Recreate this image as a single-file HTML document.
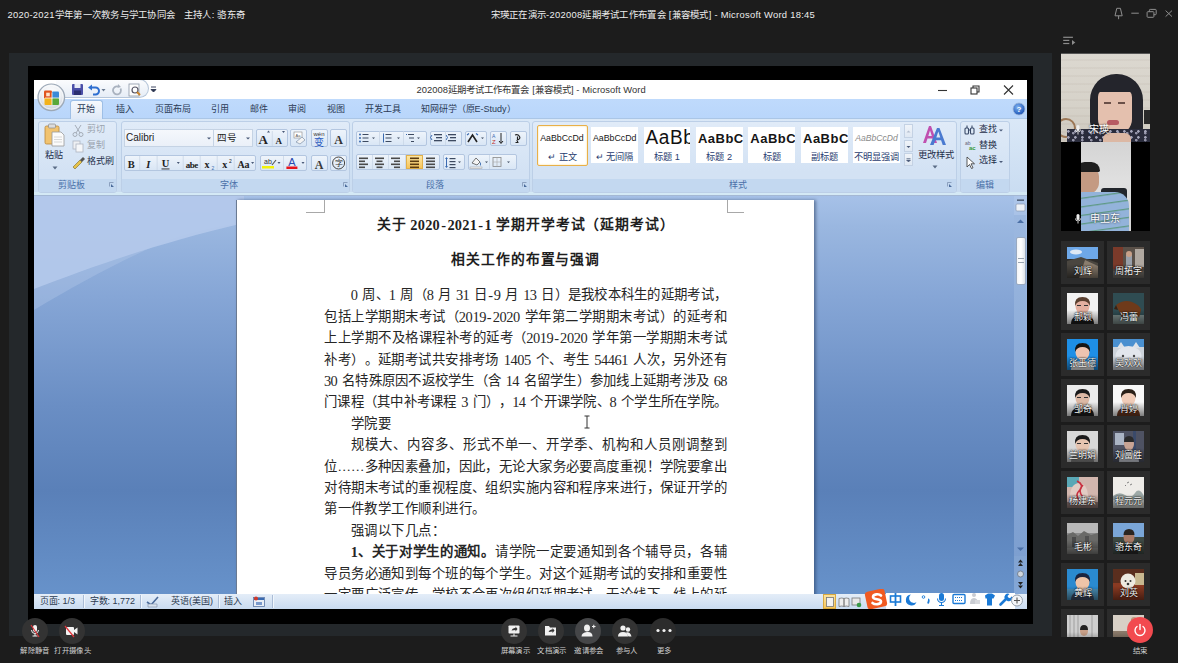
<!DOCTYPE html>
<html lang="zh-CN"><head><meta charset="utf-8">
<style>
*{margin:0;padding:0;box-sizing:border-box}
html,body{width:1178px;height:663px;overflow:hidden;background:#1c1c1c;font-family:"Liberation Sans",sans-serif;position:relative}
.a{position:absolute}
.t{white-space:nowrap}
i{font-style:normal}
#top1{left:7.5px;top:8px;color:#ececec;font-size:9.4px;line-height:14px;letter-spacing:.27px}
#top2{left:490.5px;top:8px;color:#ececec;font-size:9.4px;line-height:14px;letter-spacing:.27px}
#band{left:9px;top:53px;width:1043px;height:583px;background:#24282b}
#blk{left:28px;top:66px;width:1005px;height:558px;background:#000}
#word{left:34px;top:80px;width:993px;height:529px;background:#fff;overflow:hidden}
#ttl{left:0;top:0;width:993px;height:19px;background:#fff}
#tabs{left:0;top:19px;width:993px;height:19px;background:linear-gradient(#bfdafc,#b9d6fb)}
#rib{left:0;top:38px;width:993px;height:78px;background:linear-gradient(#dae8f7,#c9dcf1);border-bottom:1px solid #a4b8d4}
#doc{left:0;top:116px;width:993px;height:398px;overflow:hidden;background:linear-gradient(180deg,#a6c1e8 0px,#9ab7e0 30px,#86a6d6 100px,#6a8ec4 210px,#5a80b8 295px,#6792ca 398px)}
#page{left:202px;top:4px;width:578px;height:400px;background:#fff;box-shadow:inset 1px 0 0 #6a7a92,2px 0 3px rgba(40,60,95,.55)}
#sb{left:0;top:514px;width:993px;height:15px;background:linear-gradient(#e4edf8,#c9dbf0)}
.ln{position:absolute;height:16px;width:403px;font-family:"Liberation Serif",serif;font-size:13.4px;line-height:16px;color:#262626}
.c{position:absolute;top:0;text-align:center;display:block}
.b{font-weight:bold}
.d{font-size:14.4px}
.tt{position:absolute;height:16px;font-family:"Liberation Serif",serif;font-size:13.8px;line-height:16px;color:#1e1e1e;font-weight:bold}
.tab{position:absolute;top:4.6px;font-size:9px;line-height:11px;color:#2b3a55;white-space:nowrap}
.grp{position:absolute;top:2.5px;height:72.5px;border:1px solid #bccfe7;border-radius:3px;background:linear-gradient(#e0ebf8,#d3e2f4 70%);overflow:hidden}
.grp .lb{position:absolute;left:0;right:0;bottom:0;height:13.3px;background:#c3d8f0;color:#4a70a8;font-size:9px;line-height:13.3px;text-align:center}
.rt{position:absolute;font-size:9px;line-height:11px;color:#1f2f4a;white-space:nowrap}
.btn{position:absolute;border:1px solid #b3c6e0;border-radius:2px;background:linear-gradient(#eef4fb,#d9e6f5)}
.tile{position:absolute;width:43px;height:43px;background:#2b2b2b}
.av{position:absolute;left:6px;top:6px;width:31px;height:31px;overflow:hidden}
.nm{position:absolute;left:2px;top:25px;width:39px;text-align:center;color:#f4f4f4;font-size:9px;line-height:11px;text-shadow:0 0 1px #000,0 0 2px #000;white-space:nowrap}
.cb{position:absolute;width:26px;height:26px;border-radius:50%;background:#333}
.cl{position:absolute;color:#cfcfcf;font-size:7.4px;letter-spacing:.3px;line-height:10px;text-align:center;width:60px;white-space:nowrap}
.sbt{position:absolute;top:2px;font-size:9px;line-height:11px;color:#2c3a50;white-space:nowrap}
.sep{position:absolute;top:1px;width:1px;height:13px;background:#aabcd6;box-shadow:1px 0 0 #f0f6fc}

</style></head><body>
<div id="top1" class="a t">2020-2021学年第一次教务与学工协同会&nbsp;&nbsp;&nbsp;主持人: 骆东奇</div>
<div id="top2" class="a t">宋瑛正在演示-202008延期考试工作布置会 [兼容模式] - Microsoft Word 18:45</div>
<svg class="a" style="left:1110px;top:5px" width="66" height="16" viewBox="0 0 66 16">
  <g fill="none" stroke="#8e8e8e" stroke-width="1">
    <path d="M6.8 3.3h3.6l1.8 7.5H5z M8.6 10.8v3.4"/>
    <path d="M21.3 8.2h7.5"/>
    <rect x="39.4" y="4.4" width="6.8" height="5.3" rx=".8"/>
    <rect x="37.1" y="6.7" width="6.8" height="5.6" rx=".8" fill="#1c1c1c"/>
    <path d="M55.6 5.6l6.4 6M62 5.6l-6.4 6"/>
  </g>
</svg>
<svg class="a" style="left:1062px;top:34px" width="16" height="12" viewBox="0 0 16 12">
  <g fill="#8c8c8c"><rect x="1.2" y="2.7" width="9.7" height="1.2"/><rect x="1.2" y="5.8" width="6.1" height="1.2"/><rect x="1.2" y="8.9" width="6.1" height="1.2"/><path d="M10 6.1l3.3 2.3-3.3 2.5z"/></g>
</svg>
<div id="band" class="a"></div>
<div id="blk" class="a"></div>

<div id="word" class="a">
<div id="ttl" class="a">
  <div class="a t" style="left:382.5px;top:4px;font-size:9.4px;letter-spacing:.05px;line-height:11px;color:#333">202008延期考试工作布置会 [兼容模式] - Microsoft Word</div>
  <svg class="a" style="left:900px;top:3px" width="90" height="14" viewBox="0 0 90 14">
    <g fill="none" stroke="#333" stroke-width="1.1">
      <path d="M4 7.5h9"/>
      <rect x="37" y="5" width="6" height="6"/><path d="M39 5V3h6v6h-2"/>
      <path d="M70 2.5l9 9M79 2.5l-9 9"/>
    </g>
  </svg>
</div>
<div id="tabs" class="a">
  <div class="a" style="left:36px;top:1px;width:33px;height:19px;border:1px solid #9ebfe6;border-bottom:none;border-radius:3px 3px 0 0;background:linear-gradient(#f6f9fd,#dfe9f7);z-index:2"></div>
  <div class="tab" style="left:43px;z-index:3">开始</div>
  <div class="tab" style="left:82px">插入</div>
  <div class="tab" style="left:120.5px">页面布局</div>
  <div class="tab" style="left:176.5px">引用</div>
  <div class="tab" style="left:215.5px">邮件</div>
  <div class="tab" style="left:253.5px">审阅</div>
  <div class="tab" style="left:292.5px">视图</div>
  <div class="tab" style="left:330.5px">开发工具</div>
  <div class="tab" style="left:386.5px">知网研学（原E-Study）</div>
  <svg class="a" style="left:978px;top:3px" width="14" height="14" viewBox="0 0 14 14">
    <defs><radialGradient id="hg" cx="40%" cy="35%" r="65%"><stop offset="0" stop-color="#7fb2f0"/><stop offset="1" stop-color="#1c55b8"/></radialGradient></defs>
    <circle cx="7" cy="7" r="6" fill="url(#hg)" stroke="#9fb8d8" stroke-width=".8"/>
    <text x="7" y="10" font-size="8" font-weight="bold" fill="#fff" text-anchor="middle" font-family="Liberation Sans">?</text>
  </svg>
</div>
<!-- QAT capsule -->
<div class="a" style="left:22px;top:-1px;width:93px;height:19px;border:1px solid #b6c6da;border-left:none;border-radius:0 10px 10px 0;background:linear-gradient(#fbfcfe,#e6edf6)"></div>
<svg class="a" style="left:36px;top:2px" width="130" height="16" viewBox="0 0 130 16">
  <!-- save -->
  <rect x="2" y="2" width="11" height="11" rx="1" fill="#4b4fa8"/><rect x="4.5" y="2" width="6" height="4" fill="#e8ecf6"/><rect x="4" y="8.5" width="7" height="4.5" fill="#2b2f70"/>
  <!-- undo -->
  <path d="M20 5.5h5.5a3.5 3.5 0 0 1 0 7H23" fill="none" stroke="#2f6fd0" stroke-width="2"/><path d="M18 5.5l4-3v6z" fill="#2f6fd0"/>
  <path d="M31.5 7h4l-2 2.5z" fill="#6a7a90"/>
  <!-- redo -->
  <path d="M48 4.5a4 4 0 1 0 2.5 2" fill="none" stroke="#a9b2bf" stroke-width="1.8"/><path d="M48 2l3 3-3.5 1z" fill="#a9b2bf"/>
  <!-- preview -->
  <rect x="59" y="2" width="10" height="12" fill="#fdfdfd" stroke="#8a96a6" stroke-width=".8"/><circle cx="65" cy="8" r="3" fill="none" stroke="#556" stroke-width="1.2"/><path d="M67 10l3 3" stroke="#c9822a" stroke-width="2"/>
  <!-- customize -->
  <path d="M81 5h5M81 7.5h5l-2.5 2.5z" fill="#2a3450" stroke="#2a3450" stroke-width=".9"/>
</svg>
<!-- office button -->
<svg class="a" style="left:2.5px;top:2.5px" width="29" height="29" viewBox="0 0 29 29">
  <defs>
    <radialGradient id="ob" cx="50%" cy="35%" r="65%"><stop offset="0" stop-color="#ffffff"/><stop offset=".55" stop-color="#eef1f5"/><stop offset="1" stop-color="#c3cbd5"/></radialGradient>
  </defs>
  <circle cx="14.3" cy="14.3" r="13.3" fill="url(#ob)" stroke="#9ca8b6" stroke-width="1.2"/>
  <circle cx="14.3" cy="14.3" r="11.8" fill="none" stroke="#ffffff" stroke-width=".8" opacity=".8"/>
  <rect x="7" y="7.5" width="8" height="8" rx="1.2" fill="#e0541e"/>
  <rect x="9.2" y="9.7" width="3.6" height="3.6" fill="#fde3cc"/>
  <rect x="15" y="8.5" width="7" height="7" rx="1" fill="#3b8ad8"/>
  <rect x="7.5" y="15" width="7.5" height="7" rx="1" fill="#f2b21c"/>
  <rect x="15" y="15" width="7" height="7" rx="1" fill="#58a83a"/>
  <path d="M15 9.5v12M8 15h14" stroke="#fff" stroke-width=".9" opacity=".85"/>
</svg>

<div id="rib" class="a">
<div class="a" style="left:0;top:0;width:993px;height:1px;background:#abc6e6"></div>
<!-- light gaps -->
<div class="a" style="left:0;top:74.4px;width:993px;height:3px;background:#d4e9f5"></div>
<!-- clipboard -->
<div class="grp" style="left:3.7px;width:79.5px"><div class="lb" style="padding-right:12px">剪贴板</div></div>
<div class="grp" style="left:87.4px;width:228.4px"><div class="lb" style="padding-right:13px">字体</div></div>
<div class="grp" style="left:318.1px;width:177.6px"><div class="lb" style="padding-right:12px">段落</div></div>
<div class="grp" style="left:497.8px;width:425.2px"><div class="lb" style="padding-right:12px">样式</div></div>
<div class="grp" style="left:926px;width:50px"><div class="lb">编辑</div></div>
<!-- launchers -->
<svg class="a" style="left:0;top:0" width="993" height="78" viewBox="0 0 993 78">
  <g fill="none" stroke="#7d93b3" stroke-width=".8">
    <path d="M75.5 68.5v-4h4M309.5 68.5v-4h4M488.5 68.5v-4h4M913.5 68.5v-4h4"/>
  </g>
  <g fill="#4a6a9a">
    <path d="M77 66l3 3h-3z M311 66l3 3h-3z M490 66l3 3h-3z M915 66l3 3h-3z"/>
  </g>
</svg>

<!-- clipboard contents -->
<svg class="a" style="left:10px;top:5px" width="22" height="24" viewBox="0 0 22 24">
  <rect x="1" y="3" width="14" height="18" rx="1.5" fill="#f1c370" stroke="#b9873a" stroke-width=".8"/>
  <rect x="4.5" y="1" width="7" height="4" rx="1" fill="#dcdcdc" stroke="#8a8a8a" stroke-width=".7"/>
  <path d="M8 9h9l3 3v11H8z" fill="#fbfbfb" stroke="#9a9a9a" stroke-width=".8"/>
  <path d="M10 14h8M10 16.5h8M10 19h8" stroke="#c8c8c8" stroke-width=".7"/>
</svg>
<div class="rt" style="left:11px;top:32px">粘贴</div>
<svg class="a" style="left:18px;top:48px" width="6" height="4" viewBox="0 0 6 4"><path d="M0.5 0.5h5L3 3.5z" fill="#5a6c86"/></svg>
<svg class="a" style="left:37px;top:5px" width="14" height="48" viewBox="0 0 14 48">
  <g stroke="#a5adb8" stroke-width="1" fill="none"><path d="M4 2l5 8M10 2L5 10"/><circle cx="4" cy="11.5" r="2"/><circle cx="10" cy="11.5" r="2"/></g>
  <rect x="2" y="18" width="7" height="8" fill="#eef0f3" stroke="#aeb5c0" stroke-width=".8"/><rect x="5" y="21" width="7" height="8" fill="#f6f7f9" stroke="#aeb5c0" stroke-width=".8"/>
  <path d="M2 44l7-7 2 2-7 7z" fill="#e6c24a" stroke="#7a6a2a" stroke-width=".6"/><path d="M9 37l3-3 2 2-3 3z" fill="#555"/>
</svg>
<div class="rt" style="left:52.5px;top:6px;color:#9aa3ae">剪切</div>
<div class="rt" style="left:52.5px;top:21.5px;color:#9aa3ae">复制</div>
<div class="rt" style="left:52.5px;top:38px">格式刷</div>

<!-- font group contents -->
<div class="a" style="left:89.8px;top:11.4px;width:90.2px;height:18px;border:1px solid #c5d3e4;background:linear-gradient(#f5f8fc,#eaf0f8)"></div>
<div class="a" style="left:180px;top:11.4px;width:39.3px;height:18px;border:1px solid #c5d3e4;border-left:none;background:linear-gradient(#f5f8fc,#eaf0f8)"></div>
<div class="a t" style="left:92px;top:14px;font-size:10px;line-height:12px;color:#222">Calibri</div>
<div class="a t" style="left:182.5px;top:14px;font-size:9.5px;line-height:12px;color:#222">四号</div>
<svg class="a" style="left:0;top:0" width="993" height="78" viewBox="0 0 993 78">
  <path d="M173 19.5h4l-2 2z M212 19.5h4l-2 2z" fill="#4a5a78"/>
</svg>
<div class="btn" style="left:222px;top:11.4px;width:32.3px;height:18px"></div>
<div class="btn" style="left:256.4px;top:11.4px;width:17px;height:18px"></div>
<div class="btn" style="left:276.5px;top:11.4px;width:17px;height:18px"></div>
<div class="btn" style="left:296px;top:11.4px;width:17.3px;height:18px"></div>
<div class="btn" style="left:89.8px;top:37.3px;width:132.6px;height:15.5px"></div>
<div class="btn" style="left:225.6px;top:37.3px;width:47.8px;height:15.5px"></div>
<div class="btn" style="left:276.5px;top:37.3px;width:17px;height:15.5px"></div>
<div class="btn" style="left:296px;top:37.3px;width:17.3px;height:15.5px"></div>
<svg class="a" style="left:0;top:0" width="993" height="78" viewBox="0 0 993 78">
  <g font-family="Liberation Serif" font-weight="bold" fill="#222" text-anchor="middle">
    <text x="229.2" y="26" font-size="13">A</text><text x="244.7" y="26" font-size="9">A</text>
    <text x="97.2" y="50" font-size="10.5">B</text>
    <text x="114.2" y="50" font-size="10.5" font-style="italic">I</text>
    <text x="131.6" y="49" font-size="10.5">U</text>
    <text x="157.7" y="49.5" font-size="9" letter-spacing="-.5">abe</text>
    <text x="173" y="50" font-size="10">x</text>
    <text x="190.7" y="50" font-size="10">x</text>
    <text x="209.3" y="50" font-size="10" letter-spacing="-.3">Aa</text>
    <text x="304.6" y="26" font-size="12" fill="#333">A</text>
    <text x="285" y="50.5" font-size="12" fill="#3a3a3a">A</text>
  </g>
  <rect x="127.5" y="50.5" width="8" height=".9" fill="#222"/>
  <text x="177.5" y="52" font-size="5" font-family="Liberation Sans" fill="#3a6ab0">2</text>
  <text x="195" y="45" font-size="5" font-family="Liberation Sans" fill="#222">2</text>
  <g fill="#4a5a78"><path d="M233 14.5l1.5-2 1.5 2z M248 13l1.5 2 1.5-2z M142.8 44h3l-1.5 2z M217.1 44h3l-1.5 2z M243.5 44h3l-1.5 2z M267.5 44h3l-1.5 2z"/></g>
  <g stroke="#c9d6e6" stroke-width=".8"><path d="M105.7 38v14M123.1 38v14M149.2 38v14M166.2 38v14M183.2 38v14M200.2 38v14M238.3 13v15M249.5 38v14"/></g>
  <!-- highlight -->
  <text x="234" y="45.5" font-size="7" font-family="Liberation Sans" fill="#333" text-anchor="middle">ab</text><path d="M238 47l4-5" stroke="#555" stroke-width="1.2"/>
  <rect x="228" y="48" width="12" height="2.5" fill="#f2f20a"/>
  <text x="257.9" y="48" font-size="11" font-family="Liberation Sans" fill="#2a4ab0" text-anchor="middle">A</text>
  <rect x="252.4" y="48.5" width="11" height="2.5" fill="#e8141b"/>
  <!-- clear formatting -->
  <rect x="260" y="14" width="8" height="6" fill="#fff" stroke="#888" stroke-width=".6"/><text x="264" y="19" font-size="4" fill="#555" text-anchor="middle" font-family="Liberation Sans">Aa</text><path d="M262 24l6-5 3 3-5 4z" fill="#f4f4f4" stroke="#8090a8" stroke-width=".7"/>
  <!-- wen -->
  <text x="285" y="18" font-size="6" font-family="Liberation Sans" fill="#333" text-anchor="middle">wén</text>
  <text x="285" y="27.5" font-size="10" font-family="Liberation Sans" fill="#2a5ac0" text-anchor="middle">变</text>
  <!-- enclosed char -->
  <circle cx="304.6" cy="45" r="6" fill="none" stroke="#444" stroke-width="1"/><text x="304.6" y="48.3" font-size="8" fill="#333" font-family="Liberation Sans" text-anchor="middle">字</text>
</svg>

<!-- paragraph group -->
<div class="btn" style="left:321.5px;top:12.6px;width:71px;height:15.3px"></div>
<div class="btn" style="left:395.5px;top:12.6px;width:32.3px;height:15.3px"></div>
<div class="btn" style="left:430.7px;top:12.6px;width:22.6px;height:15.3px"></div>
<div class="btn" style="left:456.2px;top:12.6px;width:16.4px;height:15.3px"></div>
<div class="btn" style="left:475.7px;top:12.6px;width:17px;height:15.3px"></div>
<div class="btn" style="left:321.5px;top:36.4px;width:84.2px;height:15.3px"></div>
<div class="a" style="left:372px;top:37px;width:17px;height:14.2px;background:linear-gradient(#fde7a4,#f7c45a);border:1px solid #e2b04a"></div>
<div class="btn" style="left:408.6px;top:36.4px;width:22.9px;height:15.3px"></div>
<div class="btn" style="left:434px;top:36.4px;width:48.5px;height:15.3px"></div>
<svg class="a" style="left:0;top:0" width="993" height="78" viewBox="0 0 993 78">
  <g fill="#3d4a60">
    <!-- bullets -->
    <circle cx="326" cy="16.5" r="1" fill="#3a6ab0"/><circle cx="326" cy="20" r="1" fill="#3a6ab0"/><circle cx="326" cy="23.5" r="1" fill="#3a6ab0"/>
    <rect x="328.5" y="16" width="6" height="1"/><rect x="328.5" y="19.5" width="6" height="1"/><rect x="328.5" y="23" width="6" height="1"/>
    <path d="M338 19.5h3l-1.5 1.5z"/>
    <rect x="349" y="15.5" width="1" height="9" fill="#3a6ab0"/>
    <rect x="351.5" y="16" width="6" height="1"/><rect x="351.5" y="19.5" width="6" height="1"/><rect x="351.5" y="23" width="6" height="1"/>
    <path d="M363 19.5h3l-1.5 1.5z"/>
    <rect x="372" y="16" width="1" height="1" fill="#3a6ab0"/><rect x="374" y="16" width="6" height="1"/><rect x="375" y="19.5" width="5" height="1"/><rect x="377" y="23" width="3" height="1"/>
    <path d="M383 19.5h3l-1.5 1.5z"/>
    <!-- indent -->
    <rect x="400" y="16" width="8" height="1.3"/><rect x="402" y="19" width="6" height="1.3"/><rect x="400" y="22" width="8" height="1.3"/><path d="M398 17l-1.5 2.5 1.5 2.5" stroke="#3a6ab0" fill="none"/>
    <rect x="414" y="16" width="8" height="1.3"/><rect x="416" y="19" width="6" height="1.3"/><rect x="414" y="22" width="8" height="1.3"/><path d="M412 17l1.5 2.5-1.5 2.5" stroke="#3a6ab0" fill="none"/>
    <!-- asian -->
    <path d="M434 24l4.5-7 4.5 7" stroke="#222" stroke-width="1.6" fill="none"/><path d="M433 17l2-1.5M444 17l-2-1.5" stroke="#3a6ab0" stroke-width="1.2"/>
    <path d="M447 19.5h3l-1.5 1.5z"/>
    <!-- sort -->
    <text x="458" y="20" font-size="5" font-family="Liberation Sans" fill="#3a6ab0">A</text><text x="458" y="26" font-size="6" font-family="Liberation Sans" fill="#c03030">Z</text>
    <path d="M467 15v10M465 23l2 2.5 2-2.5" stroke="#222" fill="none"/>
    <!-- marks -->
    <path d="M481 17q3-1 4.5 1.5t-3 4M483.5 18.5v6M481.5 24.5h3" stroke="#222" stroke-width="1.2" fill="none"/>
    <!-- align -->
    <g fill="#4a4a4a">
      <rect x="325" y="39.5" width="9" height="1.6"/><rect x="325" y="42.5" width="6" height="1.6"/><rect x="325" y="45.5" width="9" height="1.6"/><rect x="325" y="48.5" width="6" height="1.6"/>
      <rect x="341" y="39.5" width="9" height="1.6"/><rect x="342.5" y="42.5" width="6" height="1.6"/><rect x="341" y="45.5" width="9" height="1.6"/><rect x="342.5" y="48.5" width="6" height="1.6"/>
      <rect x="357" y="39.5" width="9" height="1.6"/><rect x="360" y="42.5" width="6" height="1.6"/><rect x="357" y="45.5" width="9" height="1.6"/><rect x="360" y="48.5" width="6" height="1.6"/>
      <rect x="376" y="39.5" width="9" height="1.6" fill="#5a3a10"/><rect x="376" y="42.5" width="9" height="1.6" fill="#5a3a10"/><rect x="376" y="45.5" width="9" height="1.6" fill="#5a3a10"/><rect x="376" y="48.5" width="9" height="1.6" fill="#5a3a10"/>
      <rect x="392" y="39.5" width="9" height="1.6"/><rect x="392" y="42.5" width="9" height="1.6"/><rect x="392" y="45.5" width="9" height="1.6"/><rect x="392" y="48.5" width="9" height="1.6"/>
    </g>
    <!-- line spacing -->
    <path d="M412.5 39l1.5 2h-3zM412.5 50l1.5-2h-3z" fill="#3a6ab0"/><rect x="412" y="41" width="1" height="7" fill="#3a6ab0"/>
    <rect x="415.5" y="40" width="6" height="1.2"/><rect x="415.5" y="43" width="6" height="1.2"/><rect x="415.5" y="46" width="6" height="1.2"/><rect x="415.5" y="49" width="6" height="1.2"/>
    <path d="M424 43.5h3l-1.5 1.5z"/>
    <!-- shading -->
    <path d="M438 45l4-5 4 4-3 3z" fill="#f4f4f4" stroke="#555" stroke-width=".8"/><path d="M446 44q2 2 0 4" fill="#3a6ab0"/>
    <rect x="436" y="49" width="12" height="1.5" fill="#f4f4f4" stroke="#999" stroke-width=".5"/>
    <path d="M451 43.5h3l-1.5 1.5z"/>
    <rect x="459" y="39.5" width="8" height="9" fill="none" stroke="#888" stroke-width=".8"/><path d="M463 39.5v9M459 44h8" stroke="#aaa" stroke-width=".6"/>
    <path d="M473 43.5h3l-1.5 1.5z"/>
  </g>
  <g stroke="#c9d6e6" stroke-width=".8"><path d="M345.5 13v14M369.5 13v14M411.5 13v14M338.5 37v14M354.5 37v14M371.5 37v14M455.5 37v14"/></g>
</svg>

<!-- styles gallery -->
<div class="a" style="left:502.6px;top:6.7px;width:51.5px;height:41.1px;border:1.5px solid #e9b048;border-radius:2px;background:#fff;box-shadow:inset 0 0 2px #f6d78a"></div>
<div class="a" style="left:557.3px;top:9px;width:46.7px;height:36px;background:#fff"></div>
<div class="a" style="left:609.6px;top:9px;width:46.7px;height:36px;background:#fff"></div>
<div class="a" style="left:661.9px;top:9px;width:46.7px;height:36px;background:#fff"></div>
<div class="a" style="left:714.3px;top:9px;width:46.7px;height:36px;background:#fff"></div>
<div class="a" style="left:767px;top:9px;width:46.7px;height:36px;background:#fff"></div>
<div class="a" style="left:819.2px;top:9px;width:46.7px;height:36px;background:#fff"></div>
<div class="a t" style="left:505px;top:15px;font-size:8.8px;line-height:11px;color:#161616;width:46px;text-align:center">AaBbCcDd</div>
<div class="a t" style="left:557.3px;top:15px;font-size:8.8px;line-height:11px;color:#161616;width:46.7px;text-align:center">AaBbCcDd</div>
<div class="a t" style="left:609.6px;top:9px;width:46.7px;height:22px;overflow:hidden;font-size:19px;line-height:22px;color:#111;padding-left:2px;letter-spacing:.6px;transform:scaleY(1.08)">AaBb</div>
<div class="a t" style="left:661.9px;top:12px;width:46.7px;height:18px;overflow:hidden;font-weight:bold;font-size:13px;line-height:18px;color:#151515;padding-left:2px;letter-spacing:.5px">AaBbC</div>
<div class="a t" style="left:714.3px;top:12px;width:46.7px;height:18px;overflow:hidden;font-weight:bold;font-size:13px;line-height:18px;color:#151515;padding-left:2px;letter-spacing:.5px">AaBbC</div>
<div class="a t" style="left:767px;top:12px;width:46.7px;height:18px;overflow:hidden;font-weight:bold;font-size:13px;line-height:18px;color:#151515;padding-left:2px;letter-spacing:.5px">AaBbC</div>
<div class="a t" style="left:819.2px;top:15px;font-size:8.6px;line-height:11px;color:#8a8a8a;font-style:italic;width:46.7px;text-align:center">AaBbCcDd</div>
<div class="a t" style="left:503px;top:34px;font-size:9.2px;line-height:11px;color:#283c70;width:51px;text-align:center">↵ 正文</div>
<div class="a t" style="left:557.3px;top:34px;font-size:9.2px;line-height:11px;color:#283c70;width:46.7px;text-align:center">↵ 无间隔</div>
<div class="a t" style="left:609.6px;top:34px;font-size:9.2px;line-height:11px;color:#283c70;width:46.7px;text-align:center">标题 1</div>
<div class="a t" style="left:661.9px;top:34px;font-size:9.2px;line-height:11px;color:#283c70;width:46.7px;text-align:center">标题 2</div>
<div class="a t" style="left:714.3px;top:34px;font-size:9.2px;line-height:11px;color:#283c70;width:46.7px;text-align:center">标题</div>
<div class="a t" style="left:767px;top:34px;font-size:9.2px;line-height:11px;color:#283c70;width:46.7px;text-align:center">副标题</div>
<div class="a t" style="left:819.2px;top:34px;font-size:9.2px;line-height:11px;color:#283c70;width:46.7px;text-align:center">不明显强调</div>
<!-- gallery scroll -->
<div class="a" style="left:870px;top:6px;width:9px;height:13.7px;border:1px solid #c4d2e4;background:linear-gradient(#f0f4f9,#dfe8f3)"></div>
<div class="a" style="left:870px;top:21.6px;width:9px;height:12.8px;border:1px solid #c4d2e4;background:linear-gradient(#f0f4f9,#dfe8f3)"></div>
<div class="a" style="left:870px;top:35.4px;width:9px;height:12.8px;border:1px solid #c4d2e4;background:linear-gradient(#f0f4f9,#dfe8f3)"></div>
<svg class="a" style="left:870px;top:6px" width="9" height="43" viewBox="0 0 9 43"><path d="M2.5 8.5l2-2 2 2z" fill="#b5c0d0"/><path d="M2.5 22h4l-2 2z" fill="#4a5a78"/><path d="M2.5 34.5h4M2.5 36h4l-2 2z" fill="#4a5a78" stroke="#4a5a78" stroke-width=".6"/></svg>
<!-- change styles -->
<svg class="a" style="left:887px;top:5px" width="26" height="24" viewBox="0 0 26 24">
  <path d="M2 20L8 3h2l6 17h-3l-1.5-4.5h-5L5 20z M7.3 13h3.5L9 7.5z" fill="#c050b0"/>
  <path d="M9 22L16 5h2.5L25 22h-3.3l-1.6-4.7h-5.8L12.6 22z M15.3 14.5h4L17.3 8.5z" fill="#4a7ad0"/>
</svg>
<div class="a t" style="left:883.7px;top:31.5px;font-size:9.3px;line-height:11px;color:#1f2f4a">更改样式</div>
<svg class="a" style="left:898px;top:47px" width="6" height="4" viewBox="0 0 6 4"><path d="M0.5 0.5h5L3 3.5z" fill="#5a6c86"/></svg>

<!-- edit group -->
<svg class="a" style="left:928px;top:5px" width="50" height="48" viewBox="0 0 50 48">
  <g fill="none" stroke="#3a4a68" stroke-width="1.1"><rect x="3" y="5" width="3.5" height="6" rx="1"/><rect x="8.5" y="5" width="3.5" height="6" rx="1"/><path d="M5 2.5v2.5M10 2.5v2.5M6.5 7h2"/></g>
  <text x="3" y="22" font-size="5" font-family="Liberation Sans" fill="#667">ab</text><text x="7" y="27" font-size="6" font-weight="bold" font-family="Liberation Sans" fill="#3a9a3a">ac</text>
  <path d="M5 34v10l2.5-2.5 2 4 1.5-.7-2-4h3.5z" fill="#fff" stroke="#333" stroke-width=".8"/>
  <path d="M37 6.5h4l-2 2z M37 38h4l-2 2z" fill="#4a5a78"/>
</svg>
<div class="rt" style="left:945.3px;top:6px">查找</div>
<div class="rt" style="left:945.3px;top:21.5px">替换</div>
<div class="rt" style="left:945.3px;top:37.2px">选择</div>
</div>

<div id="doc" class="a">
<svg class="a" style="left:0;top:0" width="993" height="399" viewBox="0 0 993 399">
<path d="M0 114 C 40 90, 80 68, 125 48 C 150 38, 180 31, 210 26 L 210 0 L 0 0 Z" fill="#b6cbeb" opacity=".35"/>
<path d="M0 93 C 55 72, 120 48, 210 27 L 210 0 L 0 0 Z" fill="#b4c9eb" opacity=".9"/>
</svg>
<div id="page" class="a">
<div class="a" style="left:70px;top:0;width:19px;height:13px;border-right:1px solid #a8a8a8;border-bottom:1px solid #a8a8a8"></div>
<div class="a" style="left:491px;top:0;width:17px;height:13px;border-left:1px solid #a8a8a8;border-bottom:1px solid #a8a8a8"></div>
<div class="tt" style="left:140.5px;top:17px"><i class="c" style="left:0.00px;width:14.85px">关</i><i class="c" style="left:14.85px;width:14.85px">于</i><i class="c d" style="left:33.71px;width:7.42px">2</i><i class="c d" style="left:41.13px;width:7.42px">0</i><i class="c d" style="left:48.56px;width:7.42px">2</i><i class="c d" style="left:55.98px;width:7.42px">0</i><i class="c d" style="left:63.41px;width:7.42px">-</i><i class="c d" style="left:70.83px;width:7.42px">2</i><i class="c d" style="left:78.26px;width:7.42px">0</i><i class="c d" style="left:85.68px;width:7.42px">2</i><i class="c d" style="left:93.11px;width:7.42px">1</i><i class="c d" style="left:100.53px;width:7.42px">-</i><i class="c d" style="left:107.96px;width:7.42px">1</i><i class="c" style="left:119.39px;width:14.85px">学</i><i class="c" style="left:134.24px;width:14.85px">期</i><i class="c" style="left:149.09px;width:14.85px">开</i><i class="c" style="left:163.94px;width:14.85px">学</i><i class="c" style="left:178.79px;width:14.85px">考</i><i class="c" style="left:193.64px;width:14.85px">试</i><i class="c" style="left:208.49px;width:14.85px">（</i><i class="c" style="left:223.34px;width:14.85px">延</i><i class="c" style="left:238.19px;width:14.85px">期</i><i class="c" style="left:253.04px;width:14.85px">考</i><i class="c" style="left:267.89px;width:14.85px">试</i><i class="c" style="left:282.74px;width:14.85px">）</i></div>
<div class="tt" style="left:215.0px;top:52px"><i class="c" style="left:0.00px;width:14.85px">相</i><i class="c" style="left:14.85px;width:14.85px">关</i><i class="c" style="left:29.70px;width:14.85px">工</i><i class="c" style="left:44.55px;width:14.85px">作</i><i class="c" style="left:59.40px;width:14.85px">的</i><i class="c" style="left:74.25px;width:14.85px">布</i><i class="c" style="left:89.10px;width:14.85px">置</i><i class="c" style="left:103.95px;width:14.85px">与</i><i class="c" style="left:118.80px;width:14.85px">强</i><i class="c" style="left:133.65px;width:14.85px">调</i></div>
<div class="ln" style="top:87.3px;left:114.86px"><i class="c d" style="left:0.00px;width:6.71px">0</i><i class="c" style="left:11.36px;width:13.43px">周</i><i class="c" style="left:24.62px;width:13.43px">、</i><i class="c d" style="left:37.89px;width:6.71px">1</i><i class="c" style="left:49.24px;width:13.43px">周</i><i class="c" style="left:62.51px;width:13.43px">（</i><i class="c d" style="left:75.77px;width:6.71px">8</i><i class="c" style="left:87.13px;width:13.43px">月</i><i class="c d" style="left:105.20px;width:6.71px">3</i><i class="c d" style="left:111.75px;width:6.71px">1</i><i class="c" style="left:123.11px;width:13.43px">日</i><i class="c d" style="left:136.37px;width:6.71px">-</i><i class="c d" style="left:142.92px;width:6.71px">9</i><i class="c" style="left:154.28px;width:13.43px">月</i><i class="c d" style="left:172.35px;width:6.71px">1</i><i class="c d" style="left:178.90px;width:6.71px">3</i><i class="c" style="left:190.26px;width:13.43px">日</i><i class="c" style="left:203.52px;width:13.43px">）</i><i class="c" style="left:216.79px;width:13.43px">是</i><i class="c" style="left:230.05px;width:13.43px">我</i><i class="c" style="left:243.32px;width:13.43px">校</i><i class="c" style="left:256.58px;width:13.43px">本</i><i class="c" style="left:269.85px;width:13.43px">科</i><i class="c" style="left:283.12px;width:13.43px">生</i><i class="c" style="left:296.38px;width:13.43px">的</i><i class="c" style="left:309.65px;width:13.43px">延</i><i class="c" style="left:322.91px;width:13.43px">期</i><i class="c" style="left:336.18px;width:13.43px">考</i><i class="c" style="left:349.44px;width:13.43px">试</i><i class="c" style="left:362.71px;width:13.43px">，</i></div>
<div class="ln" style="top:108.7px;left:88.00px"><i class="c" style="left:0.00px;width:13.43px">包</i><i class="c" style="left:13.48px;width:13.43px">括</i><i class="c" style="left:26.97px;width:13.43px">上</i><i class="c" style="left:40.45px;width:13.43px">学</i><i class="c" style="left:53.94px;width:13.43px">期</i><i class="c" style="left:67.42px;width:13.43px">期</i><i class="c" style="left:80.91px;width:13.43px">末</i><i class="c" style="left:94.39px;width:13.43px">考</i><i class="c" style="left:107.87px;width:13.43px">试</i><i class="c" style="left:121.36px;width:13.43px">（</i><i class="c d" style="left:134.84px;width:6.71px">2</i><i class="c d" style="left:141.61px;width:6.71px">0</i><i class="c d" style="left:148.38px;width:6.71px">1</i><i class="c d" style="left:155.15px;width:6.71px">9</i><i class="c d" style="left:161.92px;width:6.71px">-</i><i class="c d" style="left:168.69px;width:6.71px">2</i><i class="c d" style="left:175.46px;width:6.71px">0</i><i class="c d" style="left:182.23px;width:6.71px">2</i><i class="c d" style="left:189.00px;width:6.71px">0</i><i class="c" style="left:200.79px;width:13.43px">学</i><i class="c" style="left:214.27px;width:13.43px">年</i><i class="c" style="left:227.76px;width:13.43px">第</i><i class="c" style="left:241.24px;width:13.43px">二</i><i class="c" style="left:254.73px;width:13.43px">学</i><i class="c" style="left:268.21px;width:13.43px">期</i><i class="c" style="left:281.70px;width:13.43px">期</i><i class="c" style="left:295.18px;width:13.43px">末</i><i class="c" style="left:308.66px;width:13.43px">考</i><i class="c" style="left:322.15px;width:13.43px">试</i><i class="c" style="left:335.63px;width:13.43px">）</i><i class="c" style="left:349.12px;width:13.43px">的</i><i class="c" style="left:362.60px;width:13.43px">延</i><i class="c" style="left:376.09px;width:13.43px">考</i><i class="c" style="left:389.57px;width:13.43px">和</i></div>
<div class="ln" style="top:130.1px;left:88.00px"><i class="c" style="left:0.00px;width:13.43px">上</i><i class="c" style="left:13.48px;width:13.43px">上</i><i class="c" style="left:26.97px;width:13.43px">学</i><i class="c" style="left:40.45px;width:13.43px">期</i><i class="c" style="left:53.94px;width:13.43px">不</i><i class="c" style="left:67.42px;width:13.43px">及</i><i class="c" style="left:80.91px;width:13.43px">格</i><i class="c" style="left:94.39px;width:13.43px">课</i><i class="c" style="left:107.87px;width:13.43px">程</i><i class="c" style="left:121.36px;width:13.43px">补</i><i class="c" style="left:134.84px;width:13.43px">考</i><i class="c" style="left:148.33px;width:13.43px">的</i><i class="c" style="left:161.81px;width:13.43px">延</i><i class="c" style="left:175.30px;width:13.43px">考</i><i class="c" style="left:188.78px;width:13.43px">（</i><i class="c d" style="left:202.26px;width:6.71px">2</i><i class="c d" style="left:209.03px;width:6.71px">0</i><i class="c d" style="left:215.80px;width:6.71px">1</i><i class="c d" style="left:222.57px;width:6.71px">9</i><i class="c d" style="left:229.34px;width:6.71px">-</i><i class="c d" style="left:236.11px;width:6.71px">2</i><i class="c d" style="left:242.88px;width:6.71px">0</i><i class="c d" style="left:249.65px;width:6.71px">2</i><i class="c d" style="left:256.42px;width:6.71px">0</i><i class="c" style="left:268.21px;width:13.43px">学</i><i class="c" style="left:281.70px;width:13.43px">年</i><i class="c" style="left:295.18px;width:13.43px">第</i><i class="c" style="left:308.66px;width:13.43px">一</i><i class="c" style="left:322.15px;width:13.43px">学</i><i class="c" style="left:335.63px;width:13.43px">期</i><i class="c" style="left:349.12px;width:13.43px">期</i><i class="c" style="left:362.60px;width:13.43px">末</i><i class="c" style="left:376.09px;width:13.43px">考</i><i class="c" style="left:389.57px;width:13.43px">试</i></div>
<div class="ln" style="top:151.5px;left:88.00px"><i class="c" style="left:0.00px;width:13.43px">补</i><i class="c" style="left:13.44px;width:13.43px">考</i><i class="c" style="left:26.88px;width:13.43px">）</i><i class="c" style="left:40.32px;width:13.43px">。</i><i class="c" style="left:53.76px;width:13.43px">延</i><i class="c" style="left:67.20px;width:13.43px">期</i><i class="c" style="left:80.64px;width:13.43px">考</i><i class="c" style="left:94.08px;width:13.43px">试</i><i class="c" style="left:107.52px;width:13.43px">共</i><i class="c" style="left:120.96px;width:13.43px">安</i><i class="c" style="left:134.40px;width:13.43px">排</i><i class="c" style="left:147.84px;width:13.43px">考</i><i class="c" style="left:161.28px;width:13.43px">场</i><i class="c d" style="left:179.70px;width:6.71px">1</i><i class="c d" style="left:186.43px;width:6.71px">4</i><i class="c d" style="left:193.15px;width:6.71px">0</i><i class="c d" style="left:199.88px;width:6.71px">5</i><i class="c" style="left:211.58px;width:13.43px">个</i><i class="c" style="left:225.02px;width:13.43px">、</i><i class="c" style="left:238.46px;width:13.43px">考</i><i class="c" style="left:251.90px;width:13.43px">生</i><i class="c d" style="left:270.32px;width:6.71px">5</i><i class="c d" style="left:277.05px;width:6.71px">4</i><i class="c d" style="left:283.77px;width:6.71px">4</i><i class="c d" style="left:290.50px;width:6.71px">6</i><i class="c d" style="left:297.22px;width:6.71px">1</i><i class="c" style="left:308.93px;width:13.43px">人</i><i class="c" style="left:322.37px;width:13.43px">次</i><i class="c" style="left:335.81px;width:13.43px">，</i><i class="c" style="left:349.25px;width:13.43px">另</i><i class="c" style="left:362.69px;width:13.43px">外</i><i class="c" style="left:376.13px;width:13.43px">还</i><i class="c" style="left:389.57px;width:13.43px">有</i></div>
<div class="ln" style="top:172.9px;left:88.00px"><i class="c d" style="left:0.00px;width:6.71px">3</i><i class="c d" style="left:6.53px;width:6.71px">0</i><i class="c" style="left:17.86px;width:13.43px">名</i><i class="c" style="left:31.10px;width:13.43px">特</i><i class="c" style="left:44.35px;width:13.43px">殊</i><i class="c" style="left:57.60px;width:13.43px">原</i><i class="c" style="left:70.85px;width:13.43px">因</i><i class="c" style="left:84.10px;width:13.43px">不</i><i class="c" style="left:97.35px;width:13.43px">返</i><i class="c" style="left:110.60px;width:13.43px">校</i><i class="c" style="left:123.84px;width:13.43px">学</i><i class="c" style="left:137.09px;width:13.43px">生</i><i class="c" style="left:150.34px;width:13.43px">（</i><i class="c" style="left:163.59px;width:13.43px">含</i><i class="c d" style="left:181.63px;width:6.71px">1</i><i class="c d" style="left:188.16px;width:6.71px">4</i><i class="c" style="left:199.48px;width:13.43px">名</i><i class="c" style="left:212.73px;width:13.43px">留</i><i class="c" style="left:225.98px;width:13.43px">学</i><i class="c" style="left:239.23px;width:13.43px">生</i><i class="c" style="left:252.48px;width:13.43px">）</i><i class="c" style="left:265.73px;width:13.43px">参</i><i class="c" style="left:278.97px;width:13.43px">加</i><i class="c" style="left:292.22px;width:13.43px">线</i><i class="c" style="left:305.47px;width:13.43px">上</i><i class="c" style="left:318.72px;width:13.43px">延</i><i class="c" style="left:331.97px;width:13.43px">期</i><i class="c" style="left:345.22px;width:13.43px">考</i><i class="c" style="left:358.47px;width:13.43px">涉</i><i class="c" style="left:371.71px;width:13.43px">及</i><i class="c d" style="left:389.75px;width:6.71px">6</i><i class="c d" style="left:396.29px;width:6.71px">8</i></div>
<div class="ln" style="top:194.3px;left:88.00px"><i class="c" style="left:0.00px;width:13.43px">门</i><i class="c" style="left:13.24px;width:13.43px">课</i><i class="c" style="left:26.49px;width:13.43px">程</i><i class="c" style="left:39.73px;width:13.43px">（</i><i class="c" style="left:52.97px;width:13.43px">其</i><i class="c" style="left:66.22px;width:13.43px">中</i><i class="c" style="left:79.46px;width:13.43px">补</i><i class="c" style="left:92.70px;width:13.43px">考</i><i class="c" style="left:105.95px;width:13.43px">课</i><i class="c" style="left:119.19px;width:13.43px">程</i><i class="c d" style="left:137.22px;width:6.71px">3</i><i class="c" style="left:148.53px;width:13.43px">门</i><i class="c" style="left:161.77px;width:13.43px">）</i><i class="c" style="left:175.01px;width:13.43px">，</i><i class="c d" style="left:188.26px;width:6.71px">1</i><i class="c d" style="left:194.78px;width:6.71px">4</i><i class="c" style="left:206.10px;width:13.43px">个</i><i class="c" style="left:219.34px;width:13.43px">开</i><i class="c" style="left:232.58px;width:13.43px">课</i><i class="c" style="left:245.83px;width:13.43px">学</i><i class="c" style="left:259.07px;width:13.43px">院</i><i class="c" style="left:272.31px;width:13.43px">、</i><i class="c d" style="left:285.56px;width:6.71px">8</i><i class="c" style="left:296.87px;width:13.43px">个</i><i class="c" style="left:310.11px;width:13.43px">学</i><i class="c" style="left:323.35px;width:13.43px">生</i><i class="c" style="left:336.60px;width:13.43px">所</i><i class="c" style="left:349.84px;width:13.43px">在</i><i class="c" style="left:363.08px;width:13.43px">学</i><i class="c" style="left:376.33px;width:13.43px">院</i><i class="c" style="left:389.57px;width:13.43px">。</i></div>
<div class="ln" style="top:215.7px;left:114.86px"><i class="c" style="left:0.00px;width:13.43px">学</i><i class="c" style="left:13.43px;width:13.43px">院</i><i class="c" style="left:26.86px;width:13.43px">要</i></div>
<div class="ln" style="top:237.1px;left:114.86px"><i class="c" style="left:0.00px;width:13.43px">规</i><i class="c" style="left:13.95px;width:13.43px">模</i><i class="c" style="left:27.90px;width:13.43px">大</i><i class="c" style="left:41.85px;width:13.43px">、</i><i class="c" style="left:55.80px;width:13.43px">内</i><i class="c" style="left:69.75px;width:13.43px">容</i><i class="c" style="left:83.70px;width:13.43px">多</i><i class="c" style="left:97.65px;width:13.43px">、</i><i class="c" style="left:111.60px;width:13.43px">形</i><i class="c" style="left:125.55px;width:13.43px">式</i><i class="c" style="left:139.50px;width:13.43px">不</i><i class="c" style="left:153.45px;width:13.43px">单</i><i class="c" style="left:167.40px;width:13.43px">一</i><i class="c" style="left:181.36px;width:13.43px">、</i><i class="c" style="left:195.31px;width:13.43px">开</i><i class="c" style="left:209.26px;width:13.43px">学</i><i class="c" style="left:223.21px;width:13.43px">季</i><i class="c" style="left:237.16px;width:13.43px">、</i><i class="c" style="left:251.11px;width:13.43px">机</i><i class="c" style="left:265.06px;width:13.43px">构</i><i class="c" style="left:279.01px;width:13.43px">和</i><i class="c" style="left:292.96px;width:13.43px">人</i><i class="c" style="left:306.91px;width:13.43px">员</i><i class="c" style="left:320.86px;width:13.43px">刚</i><i class="c" style="left:334.81px;width:13.43px">调</i><i class="c" style="left:348.76px;width:13.43px">整</i><i class="c" style="left:362.71px;width:13.43px">到</i></div>
<div class="ln" style="top:258.5px;left:88.00px"><i class="c" style="left:0.00px;width:13.43px">位</i><i class="c" style="left:13.43px;width:13.43px">…</i><i class="c" style="left:26.87px;width:13.43px">…</i><i class="c" style="left:40.30px;width:13.43px">多</i><i class="c" style="left:53.73px;width:13.43px">种</i><i class="c" style="left:67.17px;width:13.43px">因</i><i class="c" style="left:80.60px;width:13.43px">素</i><i class="c" style="left:94.03px;width:13.43px">叠</i><i class="c" style="left:107.47px;width:13.43px">加</i><i class="c" style="left:120.90px;width:13.43px">，</i><i class="c" style="left:134.33px;width:13.43px">因</i><i class="c" style="left:147.77px;width:13.43px">此</i><i class="c" style="left:161.20px;width:13.43px">，</i><i class="c" style="left:174.63px;width:13.43px">无</i><i class="c" style="left:188.07px;width:13.43px">论</i><i class="c" style="left:201.50px;width:13.43px">大</i><i class="c" style="left:214.94px;width:13.43px">家</i><i class="c" style="left:228.37px;width:13.43px">务</i><i class="c" style="left:241.80px;width:13.43px">必</i><i class="c" style="left:255.24px;width:13.43px">要</i><i class="c" style="left:268.67px;width:13.43px">高</i><i class="c" style="left:282.10px;width:13.43px">度</i><i class="c" style="left:295.54px;width:13.43px">重</i><i class="c" style="left:308.97px;width:13.43px">视</i><i class="c" style="left:322.40px;width:13.43px">！</i><i class="c" style="left:335.84px;width:13.43px">学</i><i class="c" style="left:349.27px;width:13.43px">院</i><i class="c" style="left:362.70px;width:13.43px">要</i><i class="c" style="left:376.14px;width:13.43px">拿</i><i class="c" style="left:389.57px;width:13.43px">出</i></div>
<div class="ln" style="top:279.9px;left:88.00px"><i class="c" style="left:0.00px;width:13.43px">对</i><i class="c" style="left:13.43px;width:13.43px">待</i><i class="c" style="left:26.87px;width:13.43px">期</i><i class="c" style="left:40.30px;width:13.43px">末</i><i class="c" style="left:53.73px;width:13.43px">考</i><i class="c" style="left:67.17px;width:13.43px">试</i><i class="c" style="left:80.60px;width:13.43px">的</i><i class="c" style="left:94.03px;width:13.43px">重</i><i class="c" style="left:107.47px;width:13.43px">视</i><i class="c" style="left:120.90px;width:13.43px">程</i><i class="c" style="left:134.33px;width:13.43px">度</i><i class="c" style="left:147.77px;width:13.43px">、</i><i class="c" style="left:161.20px;width:13.43px">组</i><i class="c" style="left:174.63px;width:13.43px">织</i><i class="c" style="left:188.07px;width:13.43px">实</i><i class="c" style="left:201.50px;width:13.43px">施</i><i class="c" style="left:214.94px;width:13.43px">内</i><i class="c" style="left:228.37px;width:13.43px">容</i><i class="c" style="left:241.80px;width:13.43px">和</i><i class="c" style="left:255.24px;width:13.43px">程</i><i class="c" style="left:268.67px;width:13.43px">序</i><i class="c" style="left:282.10px;width:13.43px">来</i><i class="c" style="left:295.54px;width:13.43px">进</i><i class="c" style="left:308.97px;width:13.43px">行</i><i class="c" style="left:322.40px;width:13.43px">，</i><i class="c" style="left:335.84px;width:13.43px">保</i><i class="c" style="left:349.27px;width:13.43px">证</i><i class="c" style="left:362.70px;width:13.43px">开</i><i class="c" style="left:376.14px;width:13.43px">学</i><i class="c" style="left:389.57px;width:13.43px">的</i></div>
<div class="ln" style="top:301.3px;left:88.00px"><i class="c" style="left:0.00px;width:13.43px">第</i><i class="c" style="left:13.43px;width:13.43px">一</i><i class="c" style="left:26.86px;width:13.43px">件</i><i class="c" style="left:40.29px;width:13.43px">教</i><i class="c" style="left:53.72px;width:13.43px">学</i><i class="c" style="left:67.15px;width:13.43px">工</i><i class="c" style="left:80.58px;width:13.43px">作</i><i class="c" style="left:94.01px;width:13.43px">顺</i><i class="c" style="left:107.44px;width:13.43px">利</i><i class="c" style="left:120.87px;width:13.43px">进</i><i class="c" style="left:134.30px;width:13.43px">行</i><i class="c" style="left:147.73px;width:13.43px">。</i></div>
<div class="ln" style="top:322.7px;left:114.86px"><i class="c" style="left:0.00px;width:13.43px">强</i><i class="c" style="left:13.43px;width:13.43px">调</i><i class="c" style="left:26.86px;width:13.43px">以</i><i class="c" style="left:40.29px;width:13.43px">下</i><i class="c" style="left:53.72px;width:13.43px">几</i><i class="c" style="left:67.15px;width:13.43px">点</i><i class="c" style="left:80.58px;width:13.43px">：</i></div>
<div class="ln" style="top:344.1px;left:114.86px"><i class="c b d" style="left:0.00px;width:6.71px">1</i><i class="c b" style="left:6.97px;width:13.43px">、</i><i class="c b" style="left:20.65px;width:13.43px">关</i><i class="c b" style="left:34.33px;width:13.43px">于</i><i class="c b" style="left:48.01px;width:13.43px">对</i><i class="c b" style="left:61.70px;width:13.43px">学</i><i class="c b" style="left:75.38px;width:13.43px">生</i><i class="c b" style="left:89.06px;width:13.43px">的</i><i class="c b" style="left:102.74px;width:13.43px">通</i><i class="c b" style="left:116.43px;width:13.43px">知</i><i class="c b" style="left:130.11px;width:13.43px">。</i><i class="c" style="left:143.79px;width:13.43px">请</i><i class="c" style="left:157.47px;width:13.43px">学</i><i class="c" style="left:171.16px;width:13.43px">院</i><i class="c" style="left:184.84px;width:13.43px">一</i><i class="c" style="left:198.52px;width:13.43px">定</i><i class="c" style="left:212.20px;width:13.43px">要</i><i class="c" style="left:225.89px;width:13.43px">通</i><i class="c" style="left:239.57px;width:13.43px">知</i><i class="c" style="left:253.25px;width:13.43px">到</i><i class="c" style="left:266.93px;width:13.43px">各</i><i class="c" style="left:280.62px;width:13.43px">个</i><i class="c" style="left:294.30px;width:13.43px">辅</i><i class="c" style="left:307.98px;width:13.43px">导</i><i class="c" style="left:321.66px;width:13.43px">员</i><i class="c" style="left:335.35px;width:13.43px">，</i><i class="c" style="left:349.03px;width:13.43px">各</i><i class="c" style="left:362.71px;width:13.43px">辅</i></div>
<div class="ln" style="top:365.5px;left:88.00px"><i class="c" style="left:0.00px;width:13.43px">导</i><i class="c" style="left:13.43px;width:13.43px">员</i><i class="c" style="left:26.87px;width:13.43px">务</i><i class="c" style="left:40.30px;width:13.43px">必</i><i class="c" style="left:53.73px;width:13.43px">通</i><i class="c" style="left:67.17px;width:13.43px">知</i><i class="c" style="left:80.60px;width:13.43px">到</i><i class="c" style="left:94.03px;width:13.43px">每</i><i class="c" style="left:107.47px;width:13.43px">个</i><i class="c" style="left:120.90px;width:13.43px">班</i><i class="c" style="left:134.33px;width:13.43px">的</i><i class="c" style="left:147.77px;width:13.43px">每</i><i class="c" style="left:161.20px;width:13.43px">个</i><i class="c" style="left:174.63px;width:13.43px">学</i><i class="c" style="left:188.07px;width:13.43px">生</i><i class="c" style="left:201.50px;width:13.43px">。</i><i class="c" style="left:214.94px;width:13.43px">对</i><i class="c" style="left:228.37px;width:13.43px">这</i><i class="c" style="left:241.80px;width:13.43px">个</i><i class="c" style="left:255.24px;width:13.43px">延</i><i class="c" style="left:268.67px;width:13.43px">期</i><i class="c" style="left:282.10px;width:13.43px">考</i><i class="c" style="left:295.54px;width:13.43px">试</i><i class="c" style="left:308.97px;width:13.43px">的</i><i class="c" style="left:322.40px;width:13.43px">安</i><i class="c" style="left:335.84px;width:13.43px">排</i><i class="c" style="left:349.27px;width:13.43px">和</i><i class="c" style="left:362.70px;width:13.43px">重</i><i class="c" style="left:376.14px;width:13.43px">要</i><i class="c" style="left:389.57px;width:13.43px">性</i></div>
<div class="ln" style="top:386.9px;left:88.00px"><i class="c" style="left:0.00px;width:13.43px">一</i><i class="c" style="left:13.43px;width:13.43px">定</i><i class="c" style="left:26.87px;width:13.43px">要</i><i class="c" style="left:40.30px;width:13.43px">广</i><i class="c" style="left:53.73px;width:13.43px">泛</i><i class="c" style="left:67.17px;width:13.43px">宣</i><i class="c" style="left:80.60px;width:13.43px">传</i><i class="c" style="left:94.03px;width:13.43px">，</i><i class="c" style="left:107.47px;width:13.43px">学</i><i class="c" style="left:120.90px;width:13.43px">校</i><i class="c" style="left:134.33px;width:13.43px">不</i><i class="c" style="left:147.77px;width:13.43px">会</i><i class="c" style="left:161.20px;width:13.43px">再</i><i class="c" style="left:174.63px;width:13.43px">次</i><i class="c" style="left:188.07px;width:13.43px">组</i><i class="c" style="left:201.50px;width:13.43px">织</i><i class="c" style="left:214.94px;width:13.43px">延</i><i class="c" style="left:228.37px;width:13.43px">期</i><i class="c" style="left:241.80px;width:13.43px">考</i><i class="c" style="left:255.24px;width:13.43px">试</i><i class="c" style="left:268.67px;width:13.43px">，</i><i class="c" style="left:282.10px;width:13.43px">无</i><i class="c" style="left:295.54px;width:13.43px">论</i><i class="c" style="left:308.97px;width:13.43px">线</i><i class="c" style="left:322.40px;width:13.43px">下</i><i class="c" style="left:335.84px;width:13.43px">、</i><i class="c" style="left:349.27px;width:13.43px">线</i><i class="c" style="left:362.70px;width:13.43px">上</i><i class="c" style="left:376.14px;width:13.43px">的</i><i class="c" style="left:389.57px;width:13.43px">延</i></div>
<svg class="a" style="left:347px;top:215px" width="8" height="14" viewBox="0 0 8 14"><path d="M1.5 1h5M4 1v12M1.5 13h5" stroke="#333" stroke-width="1" fill="none"/></svg>
</div>
<div class="a" style="left:980px;top:0;width:13px;height:399px;background:rgba(190,210,238,.35)"></div>
<div class="a" style="left:980px;top:19px;width:12px;height:341px;background:linear-gradient(#9cb8e0,#87a8d6 60%,#7d9fd0)"></div>
<svg class="a" style="left:980px;top:0" width="13" height="399" viewBox="0 0 13 399">
<rect x="3" y="3.5" width="7" height="1.3" fill="#3c4a60"/>
<rect x="2" y="8" width="9" height="7" rx="1" fill="#eef2f8" stroke="#8a9ab0" stroke-width=".7"/>
<path d="M3 27l3.5-3.5 3.5 3.5z" fill="#4a6fa5"/>
<path d="M3 351.5h7l-3.5 3.5z" fill="#4a6fa5"/>
<path d="M4 366.5l2.5-3 2.5 3zM4 370l2.5-3 2.5 3z" fill="#222"/>
<circle cx="6.5" cy="378" r="3" fill="#cfd6de" stroke="#6a7480" stroke-width=".8"/>
<path d="M4 386l2.5 3 2.5-3zM4 389.5l2.5 3 2.5-3z" fill="#222"/>
</svg>
<div class="a" style="left:981.5px;top:40.5px;width:10px;height:48.5px;border:1px solid #9aaac0;border-radius:2px;background:linear-gradient(90deg,#f2f4f7,#ffffff 50%,#dfe4ea)"></div>
<div class="a" style="left:983.5px;top:62px;width:6px;height:5px;border-top:1px solid #9aa4b0;border-bottom:1px solid #9aa4b0"></div>

</div>
<div id="sb" class="a">
  <div class="sbt" style="left:5.5px">页面: 1/3</div>
  <div class="sep" style="left:48.5px"></div>
  <div class="sbt" style="left:55.5px">字数: 1,772</div>
  <div class="sep" style="left:106px"></div>
  <svg class="a" style="left:112px;top:1px" width="14" height="13" viewBox="0 0 14 13"><path d="M1 7l4 3 7-8" fill="none" stroke="#4a6a9a" stroke-width="1.6"/><path d="M2 9h9v3H2z" fill="#d8e2ee" stroke="#7a8ca4" stroke-width=".6"/></svg>
  <div class="sbt" style="left:137px">英语(美国)</div>
  <div class="sep" style="left:183.5px"></div>
  <div class="sbt" style="left:190px">插入</div>
  <svg class="a" style="left:219px;top:2px" width="12" height="11" viewBox="0 0 12 11"><rect x=".5" y="1.5" width="11" height="9" fill="#e8eef6" stroke="#5a78a8" stroke-width=".8"/><rect x="1" y="2" width="10" height="2" fill="#3a6ab0"/><circle cx="3" cy="2.5" r="2" fill="#d23a2a"/><rect x="3" y="6" width="6" height="3" fill="#7a9acc"/></svg>
  <div class="sep" style="left:237.5px"></div>
  <!-- view buttons -->
  <div class="a" style="left:789px;top:0;width:13px;height:15px;background:linear-gradient(#fbe3a0,#f6c65c);border:1px solid #d9a940"></div>
  <svg class="a" style="left:790px;top:2px" width="40" height="12" viewBox="0 0 40 12">
    <rect x="2.5" y="1.5" width="7" height="9" fill="#f2f2f2" stroke="#777" stroke-width=".8"/>
    <path d="M15 2.5q3-1 5 0v8q-2-1-5 0zM20 2.5q2-1 5 0v8q-3-1-5 0z" fill="#eee" stroke="#777" stroke-width=".8"/>
    <rect x="28" y="2" width="8" height="7" fill="#e8e8e8" stroke="#777" stroke-width=".8"/><circle cx="35" cy="9" r="2.3" fill="#3a9a4a"/>
  </svg>
</div>
<!-- sogou bar -->
<div class="a" style="left:852px;top:513px;width:129px;height:16px;background:#fff"></div>
<svg class="a" style="left:830px;top:509px" width="160" height="20" viewBox="0 0 160 20">
  <g transform="rotate(-12 12 10)"><rect x="2" y="1" width="20" height="18" rx="3" fill="#f05a22"/></g>
  <path d="M17 6.5c-2-2-8-1.5-8 1.5 0 3 8 1.5 8 4.5 0 3-6 3.5-8.5 1.5" fill="none" stroke="#fff" stroke-width="2.6" stroke-linecap="round"/>
  <g fill="#1b7ad6">
    <rect x="26.5" y="7" width="10" height="6" fill="none" stroke="#1b7ad6" stroke-width="1.6"/><rect x="30.6" y="4" width="1.8" height="13"/>
    <path d="M47 5.5A5.5 5.5 0 1 0 52.5 13 4.2 4.2 0 0 1 47 5.5z"/>
    <circle cx="59.5" cy="8" r="1.3" fill="none" stroke="#1b7ad6" stroke-width=".9"/><path d="M64 10.5q1.5 0 0 4" stroke="#1b7ad6" stroke-width="1.8" fill="none"/>
    <rect x="75" y="4" width="5" height="8" rx="2.5"/><path d="M73.5 9.5a4 4 0 0 0 8 0M77.5 13.5v3M75 16.5h5" stroke="#1b7ad6" stroke-width="1.1" fill="none"/>
    <rect x="89" y="5.5" width="12" height="9" rx="1" fill="none" stroke="#1b7ad6" stroke-width="1.4"/><path d="M91 8.5h8M91 11.5h8" stroke="#1b7ad6" stroke-width="1" stroke-dasharray="1 1"/>
    <circle cx="110" cy="6" r="2" fill="#c9ccd2"/><path d="M106 15q0-6 4-6t4 6z" fill="#c9ccd2"/><rect x="111" y="11" width="5" height="4" fill="#d8dade"/>
    <path d="M121 6.5l3-2h4l3 2-1.5 3h-1.5v7h-5v-7h-1.5z"/>
    <path d="M136.5 15.5l5.5-5.5" stroke="#1b7ad6" stroke-width="2.6" stroke-linecap="round"/><path d="M141 10a3.5 3.5 0 0 1 4.5-5l-2 2 .8 1.6 1.7.6 2-2a3.5 3.5 0 0 1-5 4.5z"/>
  </g>
  <circle cx="153" cy="11.5" r="5.5" fill="#f3f5f8" stroke="#8c96a4" stroke-width=".9"/><path d="M150 11.5h6M153 8.5v6" stroke="#555" stroke-width="1.1"/>
</svg>
</div>

<div class="a" style="left:1061px;top:53px;width:89px;height:89px;overflow:hidden;background:linear-gradient(180deg,#dcd8d0 0%,#d6d2c9 60%,#cdc8be 100%)">
<div class="a" style="left:0;top:0;width:89px;height:89px;background:repeating-linear-gradient(180deg,rgba(150,135,125,0) 0px,rgba(150,135,125,0) 6px,rgba(150,135,125,.16) 7px,rgba(150,135,125,0) 8px)"></div>
<div class="a" style="left:0;top:0;width:89px;height:1px;background:#555"></div>
<div class="a" style="left:-5px;top:65px;width:20px;height:20px;border-radius:50%;border:2px solid rgba(138,90,48,.75)"></div>
<div class="a" style="left:83px;top:57px;width:6px;height:14px;background:#2a2a2a"></div>
<div class="a" style="left:29px;top:21px;width:53px;height:58px;border-radius:26px 26px 4px 10px;background:#24252c"></div>
<div class="a" style="left:37px;top:36px;width:34px;height:46px;border-radius:8px 8px 16px 16px;background:#e4c0ae"></div>
<div class="a" style="left:35px;top:24px;width:40px;height:15px;border-radius:20px 20px 2px 8px;background:#24252c"></div>
<div class="a" style="left:43px;top:49px;width:7px;height:2px;background:#6a5048"></div>
<div class="a" style="left:57px;top:49px;width:7px;height:2px;background:#6a5048"></div>
<div class="a" style="left:46px;top:67px;width:12px;height:5px;border-radius:6px;background:#b85a62"></div>
<div class="a" style="left:6px;top:76px;width:83px;height:13px;background:radial-gradient(circle at 20% 40%,#a4a4b8 0 1px,transparent 1.6px),radial-gradient(circle at 70% 60%,#9494a8 0 1px,transparent 1.6px),#2a2c3c;background-size:7px 6px,9px 7px,auto"></div>
<div class="a" style="left:42px;top:80px;width:28px;height:9px;border-radius:6px 6px 0 0;background:#dcb8a4"></div>
<svg class="a" style="left:13px;top:71px" width="8" height="12" viewBox="0 0 8 12"><rect x="2.5" y="1" width="3" height="6" rx="1.5" fill="#eee"/><path d="M1.5 5.5a2.5 2.5 0 0 0 5 0M4 8.5v2" stroke="#eee" stroke-width=".9" fill="none"/></svg>
<div class="a t" style="left:28px;top:71px;font-size:10px;line-height:12px;color:#fff;text-shadow:0 0 2px #000">宋瑛</div>
</div>
<div class="a" style="left:1061px;top:142px;width:89px;height:89px;overflow:hidden;background:#000">
<div class="a" style="left:20px;top:0;width:50px;height:89px;background:linear-gradient(180deg,#d4d4d4 0%,#e0e0e0 45%,#d4d4d4 100%)"></div>
<div class="a" style="left:40px;top:46px;width:26px;height:32px;border-radius:3px;background:#22262c"></div>
<div class="a" style="left:15px;top:25px;width:23px;height:27px;border-radius:10px 10px 12px 12px;background:#c49a82"></div>
<div class="a" style="left:15px;top:20px;width:24px;height:10px;border-radius:12px 12px 2px 2px;background:#1e1e1e"></div>
<div class="a" style="left:14px;top:50px;width:54px;height:43px;border-radius:8px 14px 0 0;background:repeating-linear-gradient(172deg,#93b3da 0px,#93b3da 6px,#5f9a86 7px,#93b3da 8.5px)"></div>
<div class="a" style="left:0;top:0;width:20px;height:89px;background:#000"></div>
<div class="a" style="left:70px;top:0;width:19px;height:89px;background:#000"></div>
<svg class="a" style="left:13px;top:71px" width="8" height="12" viewBox="0 0 8 12"><rect x="2.5" y="1" width="3" height="6" rx="1.5" fill="#eee"/><path d="M1.5 5.5a2.5 2.5 0 0 0 5 0M4 8.5v2" stroke="#eee" stroke-width=".9" fill="none"/></svg>
<div class="a t" style="left:28.5px;top:71px;font-size:10px;line-height:12px;color:#fff;text-shadow:0 0 2px #000">申卫东</div>
</div>
<div class="tile" style="left:1061px;top:241px"><svg class="av" width="31" height="31" viewBox="0 0 31 31"><defs><linearGradient id="sh00" x1="0" y1="0" x2="0" y2="1"><stop offset="0" stop-color="#000" stop-opacity="0"/><stop offset="1" stop-color="#000" stop-opacity=".5"/></linearGradient></defs><rect width="31" height="31" fill="#2e2c2a"/><rect width="31" height="12" fill="#6ea8e8"/><ellipse cx="9" cy="5" rx="6" ry="2.5" fill="#dfe9f5"/><path d="M0 14l14-4 17 6v15H0z" fill="#4a4640"/><path d="M12 31l6-18 13 6v12z" fill="#8a7d6e"/><rect y="17" width="31" height="14" fill="url(#sh00)"/></svg><div class="nm">刘辉</div></div>
<div class="tile" style="left:1107px;top:241px"><svg class="av" width="31" height="31" viewBox="0 0 31 31"><defs><linearGradient id="sh01" x1="0" y1="0" x2="0" y2="1"><stop offset="0" stop-color="#000" stop-opacity="0"/><stop offset="1" stop-color="#000" stop-opacity=".5"/></linearGradient></defs><rect width="31" height="31" fill="#5a5048"/><rect x="0" y="0" width="10" height="22" fill="#7a3a2a"/><rect x="22" y="2" width="9" height="18" fill="#b0a8a0"/><rect x="13" y="8" width="6" height="16" fill="#9aa0aa"/><circle cx="16" cy="7" r="3" fill="#c8a088"/><rect y="24" width="31" height="7" fill="#6a6660"/><rect y="17" width="31" height="14" fill="url(#sh01)"/></svg><div class="nm">周拓宇</div></div>
<div class="tile" style="left:1061px;top:287px"><svg class="av" width="31" height="31" viewBox="0 0 31 31"><defs><linearGradient id="sh10" x1="0" y1="0" x2="0" y2="1"><stop offset="0" stop-color="#000" stop-opacity="0"/><stop offset="1" stop-color="#000" stop-opacity=".5"/></linearGradient></defs><rect width="31" height="31" fill="#f2f2f2"/><path d="M4 31q0-9 11.5-9T27 31z" fill="#1e1e1e"/><rect x="13" y="18" width="5" height="6" fill="#e4b0a0"/><ellipse cx="15.5" cy="13" rx="7" ry="8.5" fill="#e4b0a0"/><path d="M8 13q-1-9 7.5-9T23 13q-2-5-7.5-5T8 13z" fill="#5a4030"/><path d="M10 12.5h4M17 12.5h4" stroke="#333" stroke-width="1.2"/><rect y="17" width="31" height="14" fill="url(#sh10)"/></svg><div class="nm">郝颖</div></div>
<div class="tile" style="left:1107px;top:287px"><svg class="av" width="31" height="31" viewBox="0 0 31 31"><defs><linearGradient id="sh11" x1="0" y1="0" x2="0" y2="1"><stop offset="0" stop-color="#000" stop-opacity="0"/><stop offset="1" stop-color="#000" stop-opacity=".5"/></linearGradient></defs><rect width="31" height="31" fill="#2f4c52"/><rect y="22" width="31" height="9" fill="#7a8a88"/><path d="M3 12q8-6 16-3t9 8l-2 8-3-6-10 1-4 6-2-6z" fill="#6e3a1a"/><path d="M3 12l-2 4 4 1z" fill="#3a2010"/><rect y="17" width="31" height="14" fill="url(#sh11)"/></svg><div class="nm">冯蕾</div></div>
<div class="tile" style="left:1061px;top:333px"><svg class="av" width="31" height="31" viewBox="0 0 31 31"><defs><linearGradient id="sh20" x1="0" y1="0" x2="0" y2="1"><stop offset="0" stop-color="#000" stop-opacity="0"/><stop offset="1" stop-color="#000" stop-opacity=".5"/></linearGradient></defs><rect width="31" height="31" fill="#1e8fe6"/><path d="M4 31q0-9 11.5-9T27 31z" fill="#f0f0f0"/><rect x="13" y="18" width="5" height="6" fill="#eec4b0"/><ellipse cx="15.5" cy="13" rx="7" ry="8.5" fill="#eec4b0"/><path d="M8 13q-1-9 7.5-9T23 13q-2-5-7.5-5T8 13z" fill="#151515"/><rect y="17" width="31" height="14" fill="url(#sh20)"/></svg><div class="nm">张玉德</div></div>
<div class="tile" style="left:1107px;top:333px"><svg class="av" width="31" height="31" viewBox="0 0 31 31"><defs><linearGradient id="sh21" x1="0" y1="0" x2="0" y2="1"><stop offset="0" stop-color="#000" stop-opacity="0"/><stop offset="1" stop-color="#000" stop-opacity=".5"/></linearGradient></defs><rect width="31" height="31" fill="#cdd3da"/><rect width="31" height="8" fill="#4a90d0"/><path d="M4 9l4-6 4 6M19 9l4-6 4 6" fill="#dde2e8"/><ellipse cx="15.5" cy="17" rx="13" ry="10" fill="#e2e6ec"/><circle cx="10" cy="17" r="1.2" fill="#444"/><circle cx="21" cy="17" r="1.2" fill="#444"/><rect y="17" width="31" height="14" fill="url(#sh21)"/></svg><div class="nm">吴欢欢</div></div>
<div class="tile" style="left:1061px;top:379px"><svg class="av" width="31" height="31" viewBox="0 0 31 31"><defs><linearGradient id="sh30" x1="0" y1="0" x2="0" y2="1"><stop offset="0" stop-color="#000" stop-opacity="0"/><stop offset="1" stop-color="#000" stop-opacity=".5"/></linearGradient></defs><rect width="31" height="31" fill="#ececec"/><path d="M4 31q0-9 11.5-9T27 31z" fill="#1e1e1e"/><rect x="13" y="18" width="5" height="6" fill="#dcb8a4"/><ellipse cx="15.5" cy="13" rx="7" ry="8.5" fill="#dcb8a4"/><path d="M8 13q-1-9 7.5-9T23 13q-2-5-7.5-5T8 13z" fill="#1a1a1a"/><path d="M10 12.5h4M17 12.5h4" stroke="#333" stroke-width="1.2"/><rect y="17" width="31" height="14" fill="url(#sh30)"/></svg><div class="nm">邹奇</div></div>
<div class="tile" style="left:1107px;top:379px"><svg class="av" width="31" height="31" viewBox="0 0 31 31"><defs><linearGradient id="sh31" x1="0" y1="0" x2="0" y2="1"><stop offset="0" stop-color="#000" stop-opacity="0"/><stop offset="1" stop-color="#000" stop-opacity=".5"/></linearGradient></defs><rect width="31" height="31" fill="#f8f8f8"/><path d="M4 31q0-9 11.5-9T27 31z" fill="#6e3a22"/><rect x="13" y="18" width="5" height="6" fill="#f0ccb8"/><ellipse cx="15.5" cy="13" rx="7" ry="8.5" fill="#f0ccb8"/><path d="M8 13q-1-9 7.5-9T23 13q-2-5-7.5-5T8 13z" fill="#2a2018"/><rect y="17" width="31" height="14" fill="url(#sh31)"/></svg><div class="nm">肖婷</div></div>
<div class="tile" style="left:1061px;top:425px"><svg class="av" width="31" height="31" viewBox="0 0 31 31"><defs><linearGradient id="sh40" x1="0" y1="0" x2="0" y2="1"><stop offset="0" stop-color="#000" stop-opacity="0"/><stop offset="1" stop-color="#000" stop-opacity=".5"/></linearGradient></defs><rect width="31" height="31" fill="#d8d8d8"/><path d="M4 31q0-9 11.5-9T27 31z" fill="#8a8a8a"/><rect x="13" y="18" width="5" height="6" fill="#e6c4b0"/><ellipse cx="15.5" cy="13" rx="7" ry="8.5" fill="#e6c4b0"/><path d="M8 13q-1-9 7.5-9T23 13q-2-5-7.5-5T8 13z" fill="#1a1a1a"/><path d="M10 12.5h4M17 12.5h4" stroke="#333" stroke-width="1.2"/><rect y="17" width="31" height="14" fill="url(#sh40)"/></svg><div class="nm">兰明娟</div></div>
<div class="tile" style="left:1107px;top:425px"><svg class="av" width="31" height="31" viewBox="0 0 31 31"><defs><linearGradient id="sh41" x1="0" y1="0" x2="0" y2="1"><stop offset="0" stop-color="#000" stop-opacity="0"/><stop offset="1" stop-color="#000" stop-opacity=".5"/></linearGradient></defs><rect width="31" height="31" fill="#4e5262"/><rect x="2" y="2" width="9" height="12" fill="#aab4c4"/><rect x="20" y="0" width="3" height="31" fill="#3a4a6a"/><path d="M6 31q0-10 10-10t10 10z" fill="#d8dce6"/><ellipse cx="16" cy="13" rx="5" ry="6.5" fill="#c8a494"/><path d="M11 11q0-6 5-6t5 6z" fill="#2a2a2a"/><rect y="17" width="31" height="14" fill="url(#sh41)"/></svg><div class="nm">刘富胜</div></div>
<div class="tile" style="left:1061px;top:471px"><svg class="av" width="31" height="31" viewBox="0 0 31 31"><defs><linearGradient id="sh50" x1="0" y1="0" x2="0" y2="1"><stop offset="0" stop-color="#000" stop-opacity="0"/><stop offset="1" stop-color="#000" stop-opacity=".5"/></linearGradient></defs><rect width="31" height="31" fill="#d2b6ae"/><rect width="12" height="10" fill="#5aa8b6"/><ellipse cx="12" cy="18" rx="9" ry="12" fill="#e2ccc4"/><path d="M10 4q8 4 2 10t6 14M16 8q-6 6 0 12" stroke="#c83040" stroke-width="1.6" fill="none"/><rect y="25" width="31" height="6" fill="#8a7470"/><rect y="17" width="31" height="14" fill="url(#sh50)"/></svg><div class="nm">杨建东</div></div>
<div class="tile" style="left:1107px;top:471px"><svg class="av" width="31" height="31" viewBox="0 0 31 31"><defs><linearGradient id="sh51" x1="0" y1="0" x2="0" y2="1"><stop offset="0" stop-color="#000" stop-opacity="0"/><stop offset="1" stop-color="#000" stop-opacity=".5"/></linearGradient></defs><rect width="31" height="31" fill="#eeece8"/><path d="M0 19q6-5 12-1t10-2 9 3v12H0z" fill="#9eaaa8"/><path d="M0 23q8-2 15 1t16-1v8H0z" fill="#c8ccc8"/><path d="M14 6l2-1M17 8l2-1M12 9l1-1" stroke="#666" stroke-width=".8"/><rect y="17" width="31" height="14" fill="url(#sh51)"/></svg><div class="nm">程元元</div></div>
<div class="tile" style="left:1061px;top:517px"><svg class="av" width="31" height="31" viewBox="0 0 31 31"><defs><linearGradient id="sh60" x1="0" y1="0" x2="0" y2="1"><stop offset="0" stop-color="#000" stop-opacity="0"/><stop offset="1" stop-color="#000" stop-opacity=".5"/></linearGradient></defs><rect width="31" height="31" fill="#8a8a8a"/><rect width="31" height="10" fill="#b8b8b8"/><path d="M0 12l6-3 5 4 6-5 7 4 7-2v21H0z" fill="#6a6a68"/><rect x="5" y="14" width="4" height="10" fill="#4a4a4a"/><rect x="18" y="13" width="4" height="12" fill="#505050"/><rect y="25" width="31" height="6" fill="#7a7a78"/><rect y="17" width="31" height="14" fill="url(#sh60)"/></svg><div class="nm">毛彬</div></div>
<div class="tile" style="left:1107px;top:517px"><svg class="av" width="31" height="31" viewBox="0 0 31 31"><defs><linearGradient id="sh61" x1="0" y1="0" x2="0" y2="1"><stop offset="0" stop-color="#000" stop-opacity="0"/><stop offset="1" stop-color="#000" stop-opacity=".5"/></linearGradient></defs><rect width="31" height="31" fill="#7aa6d8"/><rect y="14" width="31" height="17" fill="#3e4a44"/><path d="M7 31q0-10 9-10t9 10z" fill="#2a2a2a"/><ellipse cx="16" cy="14" rx="5.5" ry="7" fill="#a87a66"/><path d="M10.5 12q0-6 5.5-6t5.5 6z" fill="#2a2420"/><rect y="17" width="31" height="14" fill="url(#sh61)"/></svg><div class="nm">骆东奇</div></div>
<div class="tile" style="left:1061px;top:563px"><svg class="av" width="31" height="31" viewBox="0 0 31 31"><defs><linearGradient id="sh70" x1="0" y1="0" x2="0" y2="1"><stop offset="0" stop-color="#000" stop-opacity="0"/><stop offset="1" stop-color="#000" stop-opacity=".5"/></linearGradient></defs><rect width="31" height="31" fill="#2a8ad0"/><rect y="20" width="31" height="11" fill="#4a90b8"/><path d="M4 31q0-9 11.5-9T27 31z" fill="#3a4860"/><rect x="13" y="18" width="5" height="6" fill="#eec4a8"/><ellipse cx="15.5" cy="13" rx="7" ry="8.5" fill="#eec4a8"/><path d="M8 13q-1-9 7.5-9T23 13q-2-5-7.5-5T8 13z" fill="#1a2440"/><rect y="17" width="31" height="14" fill="url(#sh70)"/></svg><div class="nm">黄辉</div></div>
<div class="tile" style="left:1107px;top:563px"><svg class="av" width="31" height="31" viewBox="0 0 31 31"><defs><linearGradient id="sh71" x1="0" y1="0" x2="0" y2="1"><stop offset="0" stop-color="#000" stop-opacity="0"/><stop offset="1" stop-color="#000" stop-opacity=".5"/></linearGradient></defs><rect width="31" height="31" fill="#8a3a22"/><rect width="31" height="14" fill="#5a2e1e"/><rect x="22" y="4" width="9" height="12" fill="#c8b890"/><circle cx="15" cy="12" r="7.5" fill="#eeeae0"/><circle cx="12.5" cy="12" r="1" fill="#333"/><circle cx="17.5" cy="12" r="1" fill="#333"/><circle cx="15" cy="15" r="1.3" fill="#333"/><rect y="17" width="31" height="14" fill="url(#sh71)"/></svg><div class="nm">刘英</div></div>
<div class="tile" style="left:1061px;top:609px"><svg class="av" width="31" height="31" viewBox="0 0 31 31"><defs><linearGradient id="sh80" x1="0" y1="0" x2="0" y2="1"><stop offset="0" stop-color="#000" stop-opacity="0"/><stop offset="1" stop-color="#000" stop-opacity=".5"/></linearGradient></defs><rect width="31" height="31" fill="#cfcfcf"/><path d="M3 0v31M7 0v31M11 0v31M25 0v31" stroke="#b0b0b0" stroke-width="1.5"/><path d="M10 31q0-9 7-9t7 9z" fill="#9ab0d8"/><ellipse cx="17" cy="16" rx="4" ry="5" fill="#c8a088"/><path d="M13 15q0-5 4-5t4 5z" fill="#222"/><rect y="17" width="31" height="14" fill="url(#sh80)"/></svg></div>
<div class="tile" style="left:1107px;top:609px"><svg class="av" width="31" height="31" viewBox="0 0 31 31"><defs><linearGradient id="sh81" x1="0" y1="0" x2="0" y2="1"><stop offset="0" stop-color="#000" stop-opacity="0"/><stop offset="1" stop-color="#000" stop-opacity=".5"/></linearGradient></defs><rect width="31" height="31" fill="#d8d0c6"/><rect x="0" y="16" width="31" height="15" fill="#8a7a6a"/><rect x="18" y="4" width="6" height="18" fill="#5a4a40"/><circle cx="21" cy="5" r="3" fill="#c09a80"/><rect y="17" width="31" height="14" fill="url(#sh81)"/></svg></div>
<div class="a" style="left:1053px;top:636.5px;width:125px;height:27px;background:#1c1c1c"></div>
<!-- bottom toolbar -->
<div class="cb" style="left:22px;top:617.5px"></div>
<div class="cb" style="left:58.5px;top:617.5px"></div>
<svg class="a" style="left:22px;top:617.5px" width="64" height="26" viewBox="0 0 64 26">
  <rect x="11" y="7" width="4" height="7" rx="2" fill="#f2f2f2"/>
  <path d="M9.5 12a3.5 3.5 0 0 0 7 0M13 15.5v2.5M10.5 18h5" stroke="#f2f2f2" stroke-width="1" fill="none"/>
  <path d="M9 7l8 12" stroke="#e0343a" stroke-width="1.2"/>
  <rect x="44" y="9" width="8" height="8" rx="1" fill="#f2f2f2"/><path d="M52 12l3.5-2.5v7L52 14z" fill="#f2f2f2"/>
  <path d="M43 8l9 11" stroke="#e0343a" stroke-width="1.2"/>
</svg>
<div class="cl" style="left:5px;top:646px">解除静音</div>
<div class="cl" style="left:42.6px;top:646px">打开摄像头</div>

<div class="cb" style="left:501px;top:617.5px"></div>
<div class="cb" style="left:538px;top:617.5px"></div>
<div class="cb" style="left:575px;top:617.5px;background:#454648"></div>
<div class="cb" style="left:612px;top:617.5px"></div>
<div class="cb" style="left:650px;top:617.5px;background:#2c2c2c"></div>
<svg class="a" style="left:501px;top:617.5px" width="176" height="26" viewBox="0 0 176 26">
  <g fill="#f0f0f0">
    <rect x="7.5" y="7.5" width="11" height="8" rx=".8"/><path d="M12.5 15.5h1v2h-1zM9.5 17.5h7v1h-7z"/>
    <path d="M10.5 12.5q1-3 4-2.5v-1.5l2 2.5-2 2.5v-1.5q-2 0-4 .5z" fill="#333"/>
    <path d="M44 8h4l1 1.5h6v8H44z"/>
    <path d="M47.5 14q1-3 4-2.5V10l2 2.5-2 2.5v-1.5q-2 0-4 .5z" fill="#333"/>
    <ellipse cx="86" cy="10" rx="3" ry="3.6"/><path d="M80.5 18.5q0-4 5.5-4.5t5.5 4.5z"/><path d="M91 8.5h3.5M92.75 6.75v3.5" stroke="#f0f0f0" stroke-width="1.1"/>
    <circle cx="122" cy="10" r="2.6"/><path d="M117 18.5q0-4.5 5-4.5t5 4.5z"/><circle cx="127" cy="11.5" r="2.2"/><path d="M125 14.5q4-1 5.5 4h-3z"/>
    <circle cx="157" cy="12.5" r="1.6"/><circle cx="163" cy="12.5" r="1.6"/><circle cx="169" cy="12.5" r="1.6"/>
  </g>
</svg>
<div class="cl" style="left:485.4px;top:646px">屏幕演示</div>
<div class="cl" style="left:522.1px;top:646px">文档演示</div>
<div class="cl" style="left:558.9px;top:646px">邀请参会</div>
<div class="cl" style="left:596.7px;top:646px">参与人</div>
<div class="cl" style="left:634.1px;top:646px">更多</div>

<div class="a" style="left:1127px;top:617.3px;width:26px;height:26px;border-radius:50%;background:#f24a4f"></div>
<svg class="a" style="left:1127px;top:617.3px" width="26" height="26" viewBox="0 0 26 26"><path d="M10 9.5a5 5 0 1 0 6 0" fill="none" stroke="#fff" stroke-width="1.4" stroke-linecap="round"/><path d="M13 7.5v5" stroke="#fff" stroke-width="1.4" stroke-linecap="round"/></svg>
<div class="cl" style="left:1110.5px;top:646px">结束</div>


</body></html>
